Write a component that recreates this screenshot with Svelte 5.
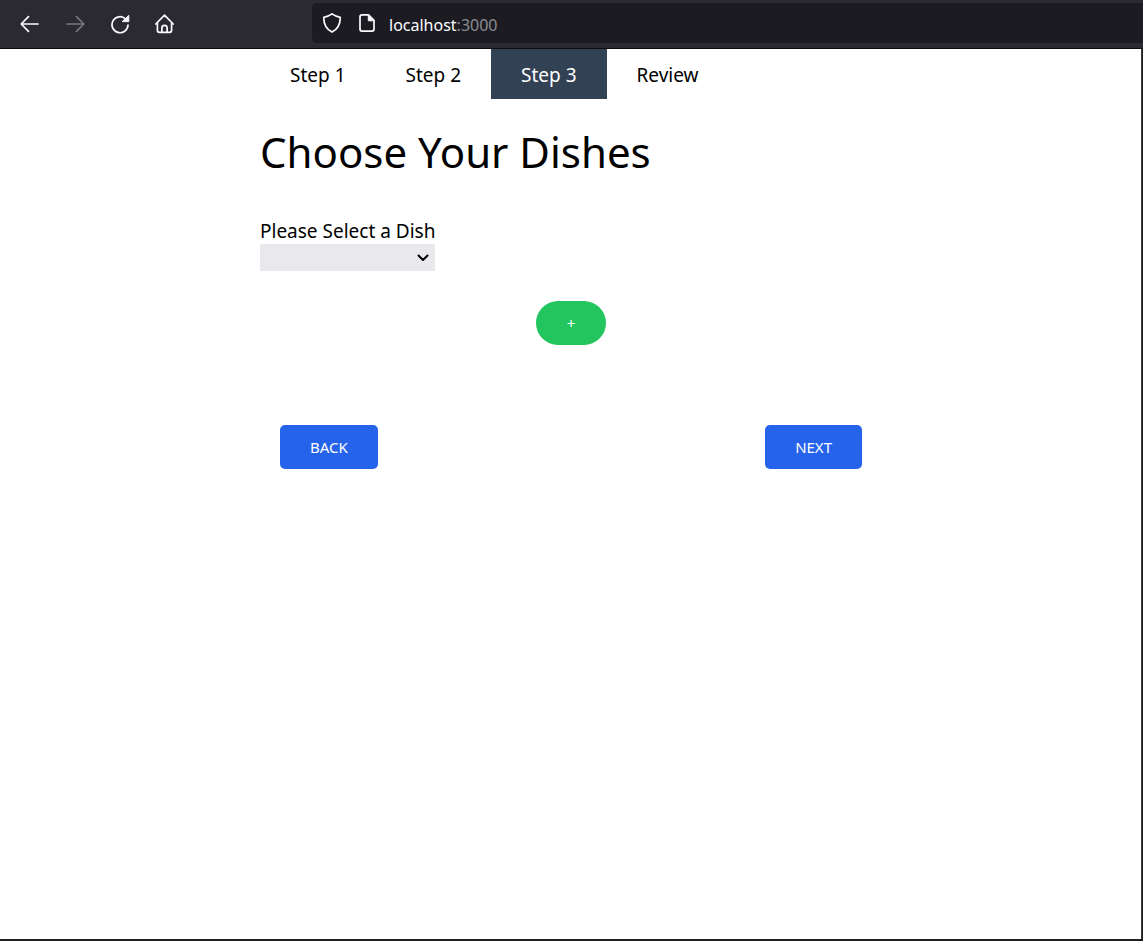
<script>
  const steps = ['Step 1', 'Step 2', 'Step 3', 'Review'];
  let current = $state(2);
  let address = { host: 'localhost', port: ':3000' };
</script>

<div class="window">
  <header class="toolbar">
    <div class="controls">
      <button aria-label="Back">
        <svg viewBox="0 0 20 20"><path d="M18 10H1.5M8.5 2.7L1.2 10L8.5 17.3" /></svg>
      </button>
      <button aria-label="Forward" disabled>
        <svg viewBox="0 0 20 20"><path d="M2 10H18.5M11.5 2.7L18.8 10L11.5 17.3" /></svg>
      </button>
      <button aria-label="Reload">
        <svg viewBox="0 0 20 20">
          <path d="M15.6 5A8 8 0 1 0 18 11" />
          <path class="solid" d="M18.8 1.8V7.6H12.6Z" />
        </svg>
      </button>
      <button aria-label="Home">
        <svg viewBox="0 0 20 20">
          <path d="M.8 10L9.5 1.2L18.2 10M2.4 8.6V16.3Q2.4 18.3 4.4 18.3H14.6Q16.6 18.3 16.6 16.3V8.6M6.9 18.2V14Q6.9 11.4 9.5 11.4T12.1 14V18.2" />
        </svg>
      </button>
    </div>
    <div class="address">
      <svg viewBox="0 0 20 20">
        <path d="M10 .9Q14 3.8 18.2 4.3Q18.6 14.5 10 19.1Q1.4 14.5 1.8 4.3Q6 3.8 10 .9Z" />
      </svg>
      <svg viewBox="0 0 20 20">
        <path d="M11.5 1.9H5Q3 1.9 3 3.9V16.1Q3 18.1 5 18.1H15Q17 18.1 17 16.1V7.4Z" />
        <path class="solid" d="M11.3 1.9V7.8H17Z" />
      </svg>
      <span class="url">{address.host}<span class="port">{address.port}</span></span>
    </div>
  </header>

  <main>
    <nav>
      {#each steps as step, i}
        <button class:active={i === current} onclick={() => (current = i)}>{step}</button>
      {/each}
    </nav>
    <h1>Choose Your Dishes</h1>
    <form onsubmit={(e) => e.preventDefault()}>
      <div class="field">
        <label for="dish">Please Select a Dish</label>
        <div class="picker">
          <select id="dish"><option value=""></option></select>
          <svg viewBox="0 0 12 8"><path d="M1.5 1.5L6 6L10.5 1.5" /></svg>
        </div>
      </div>
      <button class="add" type="button">+</button>
      <div class="actions">
        <button type="button">BACK</button>
        <button type="button">NEXT</button>
      </div>
    </form>
  </main>
</div>

<style>
  :global(body) {
    background: #fff;
  }
  .window {
    box-sizing: border-box;
    min-height: 100vh;
    border-right: 1px solid #1f1e25;
    border-bottom: 2px solid #1f1e25;
    box-shadow: inset -1px 0 #38383b;
    font-family: 'Segoe UI', 'Noto Sans', sans-serif;
    color: #000;
  }
  button {
    margin: 0;
    padding: 0;
    border: 0;
    background: none;
    color: inherit;
    font: inherit;
  }
  svg {
    display: block;
    width: 20px;
    height: 20px;
    fill: none;
    stroke: currentColor;
    stroke-width: 1.7;
    stroke-linecap: round;
    stroke-linejoin: round;
  }
  .solid {
    fill: currentColor;
    stroke-width: 1;
  }
  .toolbar {
    display: flex;
    justify-content: space-between;
    box-sizing: border-box;
    height: 49px;
    margin-right: -1px;
    padding: 3px 0 5px 20px;
    border-bottom: 1px solid #0c0c0d;
    background: #2b2a33;
    color: #fbfbfe;
  }
  .controls {
    display: flex;
    align-items: center;
    flex: 0 0 292px;
    gap: 25px;
    padding-top: 2px;
  }
  .controls button:disabled {
    color: #77767c;
  }
  .address {
    display: flex;
    align-items: center;
    flex: 1;
    gap: 15px;
    padding-left: 10px;
    border-radius: 5px 0 0 5px;
    background: #1c1b22;
  }
  .url {
    margin-left: -3px;
    padding-top: 4px;
    font-size: 16px;
    line-height: 24px;
  }
  .port {
    color: #8b8b92;
  }
  main {
    max-width: 622px;
    margin: 0 auto;
  }
  nav {
    display: flex;
  }
  nav button {
    height: 50px;
    padding: 2px 30px 0;
    font-size: 19px;
    line-height: 48px;
  }
  nav .active {
    background: #334155;
    color: #fff;
  }
  h1 {
    margin: 19px 0 30px;
    font-size: 42px;
    font-weight: 400;
    line-height: 68px;
  }
  .field {
    display: flex;
    flex-direction: column;
    width: fit-content;
  }
  label {
    padding-top: 2px;
    font-size: 19px;
    line-height: 26px;
  }
  .picker {
    display: grid;
    align-items: center;
  }
  .picker > * {
    grid-area: 1 / 1;
  }
  select {
    width: 100%;
    height: 27px;
    border: 0;
    border-radius: 0;
    background: #e9e9ed;
    appearance: none;
    font: inherit;
  }
  .picker svg {
    justify-self: end;
    width: 12px;
    height: 8px;
    margin-right: 6px;
    stroke-width: 2;
    pointer-events: none;
  }
  .add,
  .actions button {
    height: 44px;
    padding: 0 30px;
    border-radius: 5px;
    color: #fff;
    font-size: 15px;
    line-height: 44px;
    background: #2563eb;
  }
  .add {
    display: block;
    margin: 30px auto 80px;
    padding: 0 31px;
    border-radius: 22px;
    background: #22c55e;
  }
  .actions {
    display: flex;
    justify-content: space-between;
    padding: 0 20px;
  }
</style>
